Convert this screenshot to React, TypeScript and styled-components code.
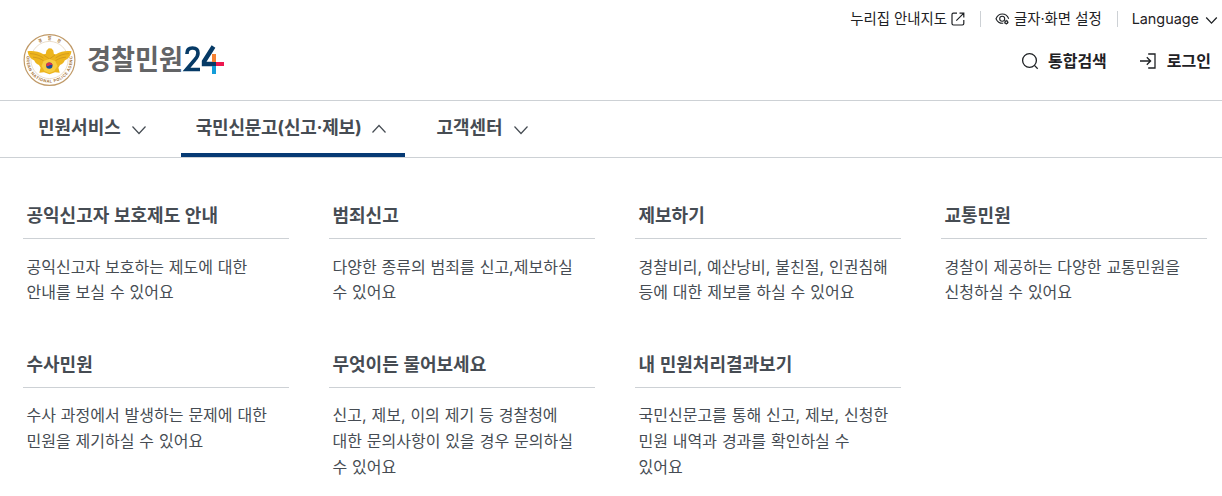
import React from 'react'

import styled, { createGlobalStyle } from 'styled-components'

const GlobalStyle = createGlobalStyle`
  * {
    box-sizing: border-box;
  }

  body {
    margin: 0;
    background: #fff;
    color: #1e2124;
    font-family: Inter, 'Noto Sans CJK KR', sans-serif;
    overflow: hidden;
  }

  h2, p, ul {
    margin: 0;
    padding: 0;
  }

  svg {
    display: block;
    flex: none;
    overflow: visible;
  }
`

const Header = styled.header`
  display: flex;
  justify-content: space-between;
  height: 100px;
  padding: 0 4px 0 23px;
`

const Brand = styled.div`
  display: flex;
  align-items: flex-start;
  padding-top: 33px;
`

const Wordmark = styled.svg`
  margin: 1px 0 0 11px;
`

const Tools = styled.div`
  display: flex;
  flex-direction: column;
  align-items: flex-end;
`

const UtilityRow = styled.ul`
  display: flex;
  align-items: center;
  height: 38px;
  font-size: 14.4px;
  line-height: 20px;
  list-style: none;
`

const UtilityItem = styled.li<{ gap: number }>`
  display: flex;
  align-items: center;
  gap: ${props => props.gap}px;
  white-space: nowrap;

  & + & {
    margin-left: 15px;
    padding-left: 15px;
    background: linear-gradient(#cdd1d5, #cdd1d5) left center / 1px 16px no-repeat;
  }
`

const ActionRow = styled.div`
  display: flex;
  align-items: center;
  gap: 33px;
  height: 46px;
  padding-right: 7px;
`

const Action = styled.a`
  display: flex;
  align-items: center;
  gap: 9px;
  font-size: 16px;
  line-height: 24px;
  font-weight: 700;
  white-space: nowrap;
`

const Nav = styled.nav`
  display: flex;
  height: 58px;
  padding-left: 23px;
  border-top: 1px solid #cdd1d5;
  border-bottom: 1px solid #cdd1d5;
`

const NavItem = styled.a<{ active?: boolean }>`
  display: flex;
  align-items: center;
  gap: 10px;
  height: 56px;
  margin-right: 16px;
  padding: 0 18px 0 15px;
  box-shadow: ${props => (props.active ? 'inset 0 -4px #063a74' : 'none')};
  color: #464c53;
  font-size: 18px;
  line-height: 26px;
  font-weight: 700;
  letter-spacing: ${props => (props.active ? '-0.25px' : 'normal')};
  white-space: nowrap;

  &>span {
    margin-top: -3px;
  }

  &>svg {
    margin-top: -1px;
  }
`

const Menu = styled.main`
  display: grid;
  grid-template-columns: repeat(4, 266px);
  column-gap: 40px;
  row-gap: 43px;
  padding: 42px 0 0 23px;
`

const MenuCard = styled.section`
  color: #464c53;
  word-spacing: 0.4px;
`

const CardTitle = styled.h2`
  height: 39px;
  padding: 2px 3.5px 0;
  border-bottom: 1px solid #cdd1d5;
  font-size: 18px;
  line-height: 27px;
  font-weight: 700;
`

const CardText = styled.p`
  padding: 15.6px 3.5px 0;
  font-size: 16px;
  line-height: 25.6px;
  white-space: pre-line;
`

const menus = [
  { title: '공익신고자 보호제도 안내', text: '공익신고자 보호하는 제도에 대한\n안내를 보실 수 있어요' },
  { title: '범죄신고', text: '다양한 종류의 범죄를 신고,제보하실\n수 있어요' },
  { title: '제보하기', text: '경찰비리, 예산낭비, 불친절, 인권침해\n등에 대한 제보를 하실 수 있어요' },
  { title: '교통민원', text: '경찰이 제공하는 다양한 교통민원을\n신청하실 수 있어요' },
  { title: '수사민원', text: '수사 과정에서 발생하는 문제에 대한\n민원을 제기하실 수 있어요' },
  { title: '무엇이든 물어보세요', text: '신고, 제보, 이의 제기 등 경찰청에\n대한 문의사항이 있을 경우 문의하실\n수 있어요' },
  { title: '내 민원처리결과보기', text: '국민신문고를 통해 신고, 제보, 신청한\n민원 내역과 경과를 확인하실 수\n있어요' },
]

const Chevron = ({ up, size = 16 }: { up?: boolean; size?: number }) => (
  <svg width={size} height={size} viewBox="0 0 16 16" fill="none" stroke="currentColor" strokeWidth={size < 16 ? 1.6 : 1.2}>
    <path d={up ? 'M1.5 11.5 8 4.5l6.5 7' : 'M1.5 5.5 8 12.5l6.5-7'} />
  </svg>
)

const ExternalIcon = () => (
  <svg width="14" height="14" viewBox="0 0 14 14" fill="none" stroke="currentColor" strokeWidth="1.2">
    <path d="M6 1.2H2.4Q1 1.2 1 2.6v9Q1 13 2.4 13h9q1.4 0 1.4-1.4V8M8.5 1.2h4.3v4.3M12.6 1.4 5.3 8.7" />
  </svg>
)

const EyeIcon = () => (
  <svg width="15" height="14" viewBox="0 0 15 14" fill="none" stroke="currentColor" strokeWidth="1.1">
    <path d="M8.2 11.3C4.900 11.500 2.200 9.400 1 6.700 2.300 3.700 4.600 2 7.300 2S12.500 3.700 13.700 6.700" />
    <circle cx="7.200" cy="6.700" r="2.500" />
    <circle cx="11.300" cy="10.200" r="1.300" />
    <path d="M11.300 7.800v1m0 2.800v1M8.900 10.200h1m2.800 0h1M9.600 8.500l.7.700m2 2 .7.700m0-3.400-.7.700m-2 2-.7.700" strokeWidth=".9" />
  </svg>
)

const SearchIcon = () => (
  <svg width="18" height="18" viewBox="0 0 18 18" fill="none" stroke="currentColor" strokeWidth="1.3">
    <circle cx="8.500" cy="8.500" r="6.900" />
    <path d="m13.400 13.400 3.300 3.300" />
  </svg>
)

const LoginIcon = () => (
  <svg width="18" height="18" viewBox="0 0 18 18" fill="none" stroke="currentColor" strokeWidth="1.3">
    <path d="M8.200 2H15v14H8.200M0 9h10.500M6.800 5.200 10.600 9l-3.800 3.800" />
  </svg>
)

const Emblem = () => (
  <svg width="53" height="54" viewBox="0 0 53 54">
    <defs>
      <path id="ring-bottom" d="M4.100 21.500A23 23 0 1 0 48.900 21.500" />
      <path id="ring-top" d="M12 13A20.500 20.500 0 0 1 41 13" />
    </defs>
    <circle cx="26.500" cy="27" r="25.400" fill="#fff" stroke="#c09a68" strokeWidth="1.200" />
    <circle cx="26.500" cy="27" r="18.600" fill="none" stroke="#ddc7a8" strokeWidth=".6" />
    <text fill="#a87942" fontSize="4" fontWeight="700" textAnchor="middle">
      <textPath href="#ring-bottom" startOffset="50%" textLength="86">KOREAN NATIONAL POLICE AGENCY</textPath>
    </text>
    <text fill="#a87942" fontSize="4" fontWeight="700" textAnchor="middle">
      <textPath href="#ring-top" startOffset="50%" textLength="22">경찰청</textPath>
    </text>
    <path d="M4.500 18.300c5.500-.7 11 .1 16 2.900l2.200-.2.800-3.500 2.300-2.200 2.700.2 1.800 2 .6 3.500 2.100.2c5-2.800 10-3.600 15.500-2.900-.8 4.600-3 7.700-6.800 9.300-.7 2.200-2.500 3.800-4.700 4.400l-1.600 2.700 1.300 5.100-4.700-.6-5.500 2-5.500-2-4.700.6 1.300-5.100-1.600-2.700c-2.200-.6-4-2.200-4.700-4.400-3.800-1.600-6-4.700-6.800-9.300Z" fill="#edb51d" />
    <path d="M7 20.600c5 .2 9.300 1.500 13.400 4.300M10 24.200c4.300.3 7.500 1.400 10.600 3.600M46 20.600c-5 .2-9.300 1.500-13.400 4.300M43 24.200c-4.300.3-7.500 1.400-10.600 3.600M20.500 22l6 4 5.500-4" fill="none" stroke="#c58c1c" strokeWidth=".6" />
    <path d="m20.500 28 5.900-2 5.900 2 2.200 5-3.200 5-4.900 2-4.900-2-3-5Z" fill="#f7ce42" />
    <circle cx="26.300" cy="32.600" r="3.200" fill="#174c9c" />
    <path d="M23.100 32.600a3.200 3.200 0 0 1 6.400 0c-1.100-1.300-2.100-.9-3.200 0s-2.100.9-3.200 0Z" fill="#df3448" />
  </svg>
)

const Logo = () => (
  <Wordmark width="138" height="48" viewBox="0 -6 138 48">
    <text x="0" y="29.500" fill="#636466" fontSize="28" fontWeight="700" textLength="96" lengthAdjust="spacingAndGlyphs">경찰민원</text>
    <path d="M100 14V13.500Q100 8 105.500 8t5.500 5c0 3-1 4.500-3.200 6.800L99.500 29.500H113" fill="none" stroke="#063a66" strokeWidth="3.600" />
    <path d="m126.500 6.500-9.500 15V24h12" fill="none" stroke="#063a66" strokeWidth="4.400" />
    <path d="M125 14h4v8h-4Z" fill="#f58233" />
    <path d="M129 22h8v4h-8Z" fill="#ed174f" />
    <path d="M125 26h4v8h-4Z" fill="#149dd9" />
  </Wordmark>
)

const App: React.FC = () => (
  <>
    <GlobalStyle />
    <Header>
      <Brand>
        <Emblem />
        <Logo />
      </Brand>
      <Tools>
        <UtilityRow>
          <UtilityItem gap={4}>누리집 안내지도 <ExternalIcon /></UtilityItem>
          <UtilityItem gap={4}><EyeIcon /> 글자·화면 설정</UtilityItem>
          <UtilityItem gap={6}>Language <Chevron size={13} /></UtilityItem>
        </UtilityRow>
        <ActionRow>
          <Action><SearchIcon /> 통합검색</Action>
          <Action><LoginIcon /> 로그인</Action>
        </ActionRow>
      </Tools>
    </Header>
    <Nav>
      <NavItem><span>민원서비스</span><Chevron /></NavItem>
      <NavItem active><span>국민신문고(신고·제보)</span><Chevron up /></NavItem>
      <NavItem><span>고객센터</span><Chevron /></NavItem>
    </Nav>
    <Menu>
      {menus.map(menu => (
        <MenuCard key={menu.title}>
          <CardTitle>{menu.title}</CardTitle>
          <CardText>{menu.text}</CardText>
        </MenuCard>
      ))}
    </Menu>
  </>
)

export default App
